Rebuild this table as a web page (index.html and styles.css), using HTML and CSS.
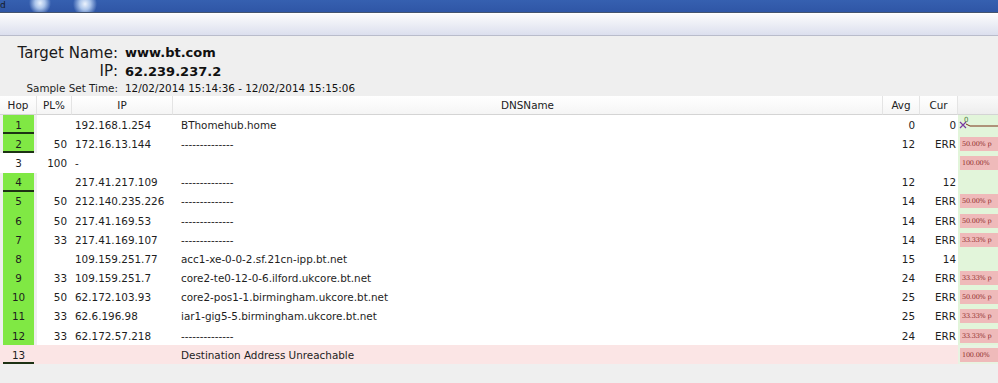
FILE: index.html
```html
<!DOCTYPE html>
<html lang="en">

<head>
    <meta charset="UTF-8">
    <meta name="viewport" content="width=device-width, initial-scale=1.0">
    <title>Trace</title>
    <link rel="stylesheet" href="styles.css">
</head>

<body>
    <div class="titlebar"><span class="title">d</span></div>
    <div class="toolbar"></div>

    <div class="info">
        <div class="label big">Target Name:</div>
        <div class="value">www.bt.com</div>
        <div class="label big">IP:</div>
        <div class="value">62.239.237.2</div>
        <div class="label">Sample Set Time:</div>
        <div class="value small">12/02/2014 15:14:36 - 12/02/2014 15:15:06</div>
    </div>

    <table class="trace">
        <colgroup>
            <col class="c-hop">
            <col class="c-pl">
            <col class="c-ip">
            <col>
            <col class="c-avg">
            <col class="c-cur">
            <col class="c-graph">
        </colgroup>
        <thead>
            <tr>
                <th>Hop</th>
                <th>PL%</th>
                <th>IP</th>
                <th>DNSName</th>
                <th>Avg</th>
                <th>Cur</th>
                <th></th>
            </tr>
        </thead>
        <tbody>
            <tr>
                <td class="hop ok under">1</td>
                <td class="pl"></td>
                <td class="ip">192.168.1.254</td>
                <td class="dns">BThomehub.home</td>
                <td class="avg">0</td>
                <td class="cur">0</td>
                <td class="graph">
                    <svg width="40" height="19" viewBox="0 0 40 19">
                        <text x="6" y="7" font-size="7" fill="#4a7a3a" font-family="DejaVu Sans">0</text>
                        <path d="M2 7 L8 13 M8 7 L2 13" stroke="#7a3aa0" stroke-width="1.2"/>
                        <path d="M8 9 L12 11 L40 11" stroke="#7a3018" stroke-width="1" fill="none"/>
                    </svg>
                </td>
            </tr>
            <tr>
                <td class="hop ok under">2</td>
                <td class="pl">50</td>
                <td class="ip">172.16.13.144</td>
                <td class="dns">--------------</td>
                <td class="avg">12</td>
                <td class="cur">ERR</td>
                <td class="graph"><div class="loss">50.00% p</div></td>
            </tr>
            <tr>
                <td class="hop">3</td>
                <td class="pl">100</td>
                <td class="ip">-</td>
                <td class="dns"></td>
                <td class="avg"></td>
                <td class="cur"></td>
                <td class="graph"><div class="loss">100.00%</div></td>
            </tr>
            <tr>
                <td class="hop ok under">4</td>
                <td class="pl"></td>
                <td class="ip">217.41.217.109</td>
                <td class="dns">--------------</td>
                <td class="avg">12</td>
                <td class="cur">12</td>
                <td class="graph"></td>
            </tr>
            <tr>
                <td class="hop ok">5</td>
                <td class="pl">50</td>
                <td class="ip">212.140.235.226</td>
                <td class="dns">--------------</td>
                <td class="avg">14</td>
                <td class="cur">ERR</td>
                <td class="graph"><div class="loss">50.00% p</div></td>
            </tr>
            <tr>
                <td class="hop ok">6</td>
                <td class="pl">50</td>
                <td class="ip">217.41.169.53</td>
                <td class="dns">--------------</td>
                <td class="avg">14</td>
                <td class="cur">ERR</td>
                <td class="graph"><div class="loss">50.00% p</div></td>
            </tr>
            <tr>
                <td class="hop ok">7</td>
                <td class="pl">33</td>
                <td class="ip">217.41.169.107</td>
                <td class="dns">--------------</td>
                <td class="avg">14</td>
                <td class="cur">ERR</td>
                <td class="graph"><div class="loss">33.33% p</div></td>
            </tr>
            <tr>
                <td class="hop ok">8</td>
                <td class="pl"></td>
                <td class="ip">109.159.251.77</td>
                <td class="dns">acc1-xe-0-0-2.sf.21cn-ipp.bt.net</td>
                <td class="avg">15</td>
                <td class="cur">14</td>
                <td class="graph"></td>
            </tr>
            <tr>
                <td class="hop ok">9</td>
                <td class="pl">33</td>
                <td class="ip">109.159.251.7</td>
                <td class="dns">core2-te0-12-0-6.ilford.ukcore.bt.net</td>
                <td class="avg">24</td>
                <td class="cur">ERR</td>
                <td class="graph"><div class="loss">33.33% p</div></td>
            </tr>
            <tr>
                <td class="hop ok">10</td>
                <td class="pl">50</td>
                <td class="ip">62.172.103.93</td>
                <td class="dns">core2-pos1-1.birmingham.ukcore.bt.net</td>
                <td class="avg">25</td>
                <td class="cur">ERR</td>
                <td class="graph"><div class="loss">50.00% p</div></td>
            </tr>
            <tr>
                <td class="hop ok">11</td>
                <td class="pl">33</td>
                <td class="ip">62.6.196.98</td>
                <td class="dns">iar1-gig5-5.birmingham.ukcore.bt.net</td>
                <td class="avg">25</td>
                <td class="cur">ERR</td>
                <td class="graph"><div class="loss">33.33% p</div></td>
            </tr>
            <tr>
                <td class="hop ok">12</td>
                <td class="pl">33</td>
                <td class="ip">62.172.57.218</td>
                <td class="dns">--------------</td>
                <td class="avg">24</td>
                <td class="cur">ERR</td>
                <td class="graph"><div class="loss">33.33% p</div></td>
            </tr>
            <tr class="unreach">
                <td class="hop under">13</td>
                <td class="pl"></td>
                <td class="ip"></td>
                <td class="dns">Destination Address Unreachable</td>
                <td class="avg"></td>
                <td class="cur"></td>
                <td class="graph"><div class="loss">100.00%</div></td>
            </tr>
        </tbody>
    </table>
</body>

</html>
```

FILE: styles.css
```css
body {
    margin: 0;
    background: #efefef;
    font-family: "DejaVu Sans", Verdana, sans-serif;
    font-size: 10.4px;
    color: #1e1e1e;
}

.titlebar {
    height: 12px;
    background:
        radial-gradient(ellipse 11px 12px at 40px 3px, #e6f0fd 0, rgba(200, 222, 250, 0.8) 45%, transparent 100%),
        radial-gradient(ellipse 12px 13px at 85px 4px, #ecf3fd 0, rgba(200, 222, 250, 0.8) 45%, transparent 100%),
        linear-gradient(#3660b0, #2f56a6);
    border-bottom: 1px solid #45546e;
    box-shadow: 0 1px 0 #ffffff;
    overflow: hidden;
}

.title {
    display: block;
    font-size: 9px;
    line-height: 10px;
    color: #151a26;
}

.toolbar {
    height: 21px;
    margin-top: 1px;
    background: linear-gradient(#fbfbfd, #f2f3f8 30%, #dcdfee);
    border-bottom: 1px solid #b9bccb;
}

.info {
    display: grid;
    grid-template-columns: 118px auto;
    grid-template-rows: 19px 18px 16px;
    column-gap: 7px;
    align-items: center;
    align-content: start;
    padding-top: 7px;
    height: 53px;
}

.label {
    text-align: right;
}

.label.big {
    font-size: 15px;
    color: #1a1a1a;
}

.value {
    font-weight: bold;
    font-size: 13px;
    color: #111;
}

.value.small {
    font-weight: normal;
    font-size: 10.4px;
}

.trace {
    width: 998px;
    table-layout: fixed;
    border-collapse: separate;
    border-spacing: 0;
}

.c-hop { width: 37px; }
.c-pl { width: 35px; }
.c-ip { width: 101px; }
.c-avg { width: 37px; }
.c-cur { width: 38px; }
.c-graph { width: 40px; }

th {
    height: 18px;
    padding: 0;
    font-weight: normal;
    text-align: center;
    background: linear-gradient(#ffffff, #f5f5f5);
    border-right: 1px solid #e4e4e4;
    border-bottom: 1px solid #d4d4d4;
    color: #222;
}

th:last-child {
    border-right: 0;
    background: linear-gradient(#fafafa, #ededed);
}

tbody tr {
    height: 19.2px;
}

td {
    padding: 0;
    background: #ffffff;
    white-space: nowrap;
    overflow: hidden;
}

.hop {
    padding: 0 3px;
    text-align: center;
}

.hop.ok {
    background: #80e844;
    background-clip: content-box;
}

.hop.ok.under {
    background: linear-gradient(to top, #1d3214 2px, #80e844 2px);
    background-clip: content-box;
}

.pl {
    text-align: right;
    padding-right: 5px;
}

.ip {
    padding-left: 3px;
}

.dns {
    padding-left: 8px;
}

.avg {
    text-align: right;
    padding-right: 5px;
}

.cur {
    text-align: right;
    padding-right: 2px;
}

.graph {
    background: #e2f5da;
    vertical-align: middle;
}

.graph svg {
    display: block;
}

.loss {
    margin-left: 2px;
    height: 14px;
    line-height: 14px;
    padding-left: 2px;
    background: #efbaba;
    color: #8e2a2a;
    font-family: "DejaVu Serif", serif;
    font-size: 6.5px;
    letter-spacing: -0.2px;
    overflow: hidden;
}

.unreach td {
    background: #fbe5e5;
}

.unreach .hop.under {
    background: linear-gradient(to top, #1d3214 2px, transparent 2px), #fbe5e5;
    background-clip: content-box, border-box;
}

.unreach .graph {
    background: #e8f3e2;
}
```
